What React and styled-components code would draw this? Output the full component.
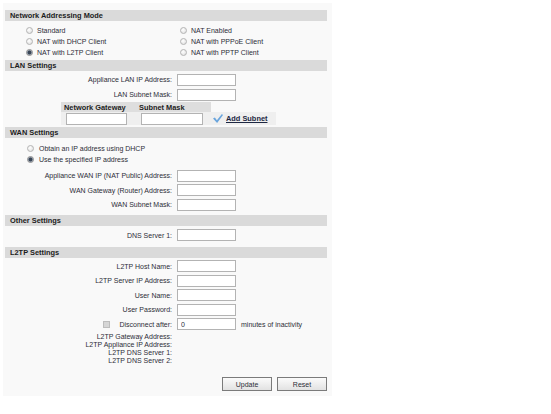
import React from "react";
import styled, { createGlobalStyle } from "styled-components";

const GlobalStyle = createGlobalStyle`
  html, body {
    margin: 0;
    background: #ffffff;
  }
  body {
    font-family: "Liberation Sans", Arial, sans-serif;
    font-size: 7px;
    color: #2d2d38;
  }
`;

const Panel = styled.div`
  margin: 3px 0 0 3px;
  width: 329px;
  box-sizing: border-box;
  padding: 7px 5px 5px 2px;
  background: #f9f9f9;
`;

const SectionHeader = styled.div`
  height: 11px;
  line-height: 11px;
  padding-left: 5px;
  background: #dadada;
  color: #1c1c1c;
  font-weight: bold;
  font-size: 7.4px;
`;

const Section = styled.div`
  padding: ${(p) => p.$pad || "0"};
`;

const RadioGrid = styled.div`
  display: grid;
  grid-template-columns: 154px 1fr;
  grid-auto-rows: 11px;
  padding: 4px 0 2px 21px;
`;

const RadioStack = styled.div`
  display: grid;
  grid-auto-rows: 11px;
  padding-left: 22px;
`;

const RadioLabel = styled.label`
  display: flex;
  align-items: center;
  gap: ${(p) => p.$gap || 4}px;
  white-space: nowrap;
`;

const Radio = styled.input.attrs({ type: "radio" })`
  appearance: none;
  margin: 0;
  width: 7px;
  height: 7px;
  border-radius: 50%;
  border: 1px solid #b4b4b4;
  box-sizing: border-box;
  background: radial-gradient(circle at 40% 35%, #ffffff 0%, #e6e6e6 70%, #d0d0d0 100%);
  &:checked {
    background: radial-gradient(circle, #3a4656 0 1.6px, #8d9aab 2.2px, #e4e4e4 3px);
    border-color: #8c8c8c;
  }
`;

const FieldList = styled.div`
  padding: ${(p) => p.$pad || "0"};
`;

const FieldRow = styled.div`
  display: grid;
  grid-template-columns: 167px 59px auto;
  column-gap: 5px;
  align-items: center;
  height: ${(p) => p.$h || 14.5}px;
`;

const FieldLabel = styled.label`
  display: flex;
  justify-content: flex-end;
  align-items: center;
  white-space: nowrap;
`;

const TextInput = styled.input.attrs({ type: "text" })`
  display: block;
  box-sizing: border-box;
  width: ${(p) => p.$w || 59}px;
  height: 12px;
  margin: 0;
  padding: 0 3px;
  border: 1px solid #b3b3b3;
  background: #ffffff;
  font-family: "Liberation Sans", Arial, sans-serif;
  font-size: 7px;
  color: #2d2d38;
  outline: none;
`;

const CheckBox = styled.input.attrs({ type: "checkbox" })`
  appearance: none;
  margin: 0 9px 0 0;
  width: 7px;
  height: 7px;
  box-sizing: border-box;
  border: 1px solid #bdbdbd;
  background: #d6d6d6;
`;

const Hint = styled.span`
  white-space: nowrap;
`;

const SubnetTable = styled.table`
  border-collapse: collapse;
  margin: 0 0 2px 56px;
  table-layout: fixed;
`;

const HeadCell = styled.th`
  width: ${(p) => p.$w}px;
  height: 10px;
  padding: 0 0 0 3px;
  text-align: left;
  font-size: 7.4px;
  font-weight: bold;
  color: #1c1c1c;
  background: ${(p) => (p.$blank ? "transparent" : "#dedede")};
  white-space: nowrap;
  box-sizing: border-box;
`;

const BodyCell = styled.td`
  height: 13px;
  padding: 0 0 0 ${(p) => p.$pl || 5}px;
  background: #efefef;
  box-sizing: border-box;
`;

const AddLink = styled.a`
  display: flex;
  align-items: center;
  gap: 3px;
  font-size: 7.4px;
  font-weight: bold;
  color: #1d2742;
  text-decoration: underline;
  white-space: nowrap;
  cursor: pointer;
`;

const StaticLines = styled.div`
  width: 167px;
  margin-top: 1.5px;
  text-align: right;
  line-height: 8px;
  white-space: nowrap;
`;

const ButtonBar = styled.div`
  display: flex;
  justify-content: flex-end;
  gap: 5px;
  margin-top: 12px;
`;

const Button = styled.button`
  width: 50px;
  height: 14px;
  padding: 0;
  border: 1px solid #7b7b7b;
  background: linear-gradient(#fbfbfb, #e2e2e2);
  font-family: "Liberation Sans", Arial, sans-serif;
  font-size: 7px;
  color: #2d2d38;
`;

const CheckIcon = () => (
  <svg width="10" height="9" viewBox="0 0 10 9">
    <polygon points="0,4.6 1.9,3.6 3.9,6.2 8.9,0 10,0.9 4.1,9" fill="#6aa5dd" />
  </svg>
);

const modes = [
  ["standard", "Standard"],
  ["nat", "NAT Enabled"],
  ["dhcp", "NAT with DHCP Client"],
  ["pppoe", "NAT with PPPoE Client"],
  ["l2tp", "NAT with L2TP Client"],
  ["pptp", "NAT with PPTP Client"],
];

const Field = ({ label, value, h }) => (
  <FieldRow $h={h}>
    <FieldLabel>{label}</FieldLabel>
    <TextInput defaultValue={value} />
  </FieldRow>
);

export default function App() {
  return (
    <>
      <GlobalStyle />
      <Panel>
        <SectionHeader>Network Addressing Mode</SectionHeader>
        <RadioGrid>
          {modes.map(([id, text]) => (
            <RadioLabel key={id}>
              <Radio name="mode" defaultChecked={id === "l2tp"} />
              {text}
            </RadioLabel>
          ))}
        </RadioGrid>

        <SectionHeader>LAN Settings</SectionHeader>
        <FieldList $pad="1px 0 0">
          <Field label="Appliance LAN IP Address:" h={15} />
          <Field label="LAN Subnet Mask:" h={15} />
        </FieldList>
        <SubnetTable>
          <thead>
            <tr>
              <HeadCell $w={75}>Network Gateway</HeadCell>
              <HeadCell $w={75}>Subnet Mask</HeadCell>
              <HeadCell $w={65} $blank />
            </tr>
          </thead>
          <tbody>
            <tr>
              <BodyCell>
                <TextInput $w={61} />
              </BodyCell>
              <BodyCell>
                <TextInput $w={62} />
              </BodyCell>
              <BodyCell $pl={2}>
                <AddLink>
                  <CheckIcon />
                  Add Subnet
                </AddLink>
              </BodyCell>
            </tr>
          </tbody>
        </SubnetTable>

        <SectionHeader>WAN Settings</SectionHeader>
        <Section $pad="5px 0 3px">
          <RadioStack>
            <RadioLabel $gap={5}>
              <Radio name="wan" />
              Obtain an IP address using DHCP
            </RadioLabel>
            <RadioLabel $gap={5}>
              <Radio name="wan" defaultChecked />
              Use the specified IP address
            </RadioLabel>
          </RadioStack>
          <FieldList $pad="3.5px 0 0">
            <Field label="Appliance WAN IP (NAT Public) Address:" />
            <Field label="WAN Gateway (Router) Address:" />
            <Field label="WAN Subnet Mask:" />
          </FieldList>
        </Section>

        <SectionHeader>Other Settings</SectionHeader>
        <FieldList $pad="2px 0 4px">
          <Field label="DNS Server 1:" />
        </FieldList>

        <SectionHeader>L2TP Settings</SectionHeader>
        <FieldList $pad="1.5px 0 0">
          <Field label="L2TP Host Name:" />
          <Field label="L2TP Server IP Address:" />
          <Field label="User Name:" />
          <Field label="User Password:" />
          <FieldRow>
            <FieldLabel>
              <CheckBox />
              Disconnect after:
            </FieldLabel>
            <TextInput defaultValue="0" />
            <Hint>minutes of inactivity</Hint>
          </FieldRow>
        </FieldList>
        <StaticLines>
          <div>L2TP Gateway Address:</div>
          <div>L2TP Appliance IP Address:</div>
          <div>L2TP DNS Server 1:</div>
          <div>L2TP DNS Server 2:</div>
        </StaticLines>
        <ButtonBar>
          <Button>Update</Button>
          <Button>Reset</Button>
        </ButtonBar>
      </Panel>
    </>
  );
}
